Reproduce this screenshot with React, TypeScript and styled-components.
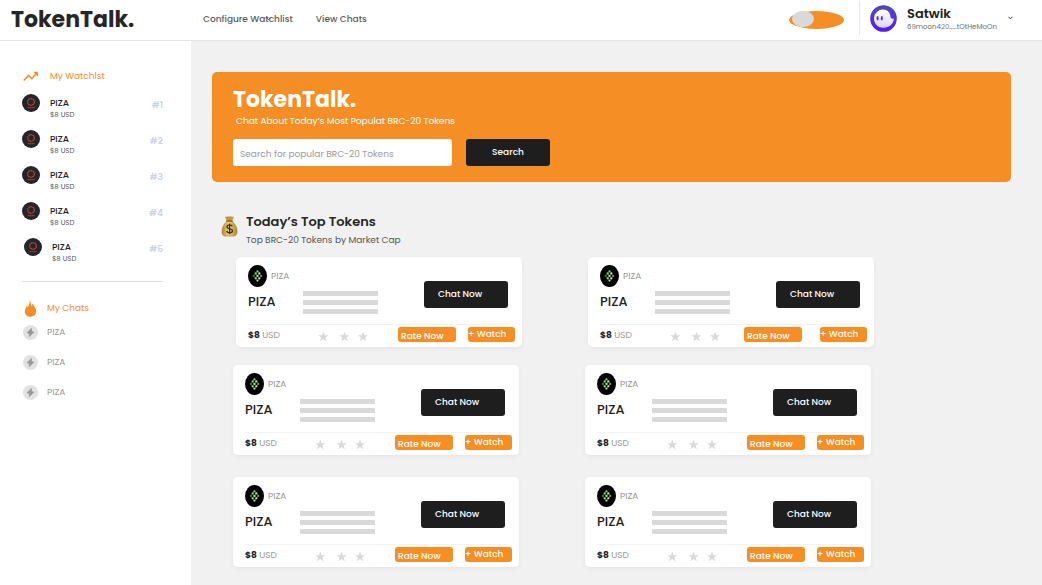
import React from "react";
import styled, { createGlobalStyle } from "styled-components";

const orange = "#f58e25";
const ink = "#1e1e1e";

const GlobalStyle = createGlobalStyle`
  *, *::before, *::after { box-sizing: border-box; }
  body {
    margin: 0;
    background: #f1f1f1;
    color: ${ink};
    font-family: Poppins, Inter, "Liberation Sans", sans-serif;
  }
  button, input { font-family: inherit; }
  h1, h2, h3, p, ul, ol { margin: 0; padding: 0; }
  ul, ol { list-style: none; }
`;

const Page = styled.div`
  display: flex;
  flex-direction: column;
  min-height: 100vh;
`;

/* ---------- header ---------- */

const Header = styled.header`
  display: flex;
  align-items: center;
  height: 41px;
  background: #fff;
  border-bottom: 1px solid #e6e6e6;
`;

const Logo = styled.a`
  flex: none;
  width: 192px;
  padding-left: 11px;
  font-size: 22px;
  line-height: 28px;
  font-weight: 700;
  color: #262626;
  text-decoration: none;
`;

const Nav = styled.nav`
  display: flex;
  flex: 1;
  gap: 23px;
  padding: 0 11px 3px;
`;

const NavLink = styled.a`
  position: relative;
  font-size: 9px;
  line-height: 14px;
  font-weight: 500;
  color: #5c5c5c;
  text-decoration: none;
`;

const NavMark = styled.svg`
  position: absolute;
  left: 63px;
  top: 5px;
`;

const Toggle = styled.input`
  appearance: none;
  flex: none;
  width: 55px;
  height: 18px;
  margin: 0 15px 0 0;
  padding: 0 3px;
  border-radius: 50%;
  background: ${orange};
  cursor: pointer;

  &::before {
    content: "";
    display: block;
    width: 22px;
    height: 16px;
    border-radius: 50%;
    background: #d9d9d9;
  }
`;

const Account = styled.button`
  display: flex;
  align-items: center;
  height: 34px;
  margin: 0 0 4px;
  padding: 0 29px 0 10px;
  border: 0;
  border-left: 1px solid #e6e6e6;
  background: none;
  text-align: left;
  color: ${ink};
  cursor: pointer;
`;

const AccountText = styled.span`
  display: flex;
  flex-direction: column;
  width: 90px;
  margin: 0 11px 0 10px;
  padding-top: 2px;
`;

const AccountName = styled.span`
  font-size: 13px;
  line-height: 16px;
  font-weight: 600;
`;

const AccountAddress = styled.span`
  font-size: 7px;
  line-height: 10px;
  color: #6f6f6f;
`;

/* ---------- sidebar ---------- */

const Body = styled.div`
  display: flex;
  flex: 1;
`;

const Sidebar = styled.aside`
  flex: none;
  width: 192px;
  padding: 25px 28px 0 22px;
  background: #fff;
  border-right: 1px solid #f1f1f1;
`;

const SideHeading = styled.h2<{ $indent: number }>`
  display: grid;
  grid-template-columns: ${(p) => p.$indent}px 1fr;
  align-items: center;
  height: 21px;
  font-size: 9px;
  font-weight: 400;
  color: ${orange};
`;

const WatchItem = styled.li`
  display: flex;
  height: 36px;

  &:last-child { padding-left: 2px; }
`;

const WatchCoin = styled.svg`
  flex: none;
  margin: 7px 10px 0 0;
`;

const WatchText = styled.div`
  flex: 1;
  padding-top: 10px;
`;

const WatchName = styled.p`
  font-size: 9px;
  line-height: 13px;
  font-weight: 500;
`;

const WatchPrice = styled.p`
  font-size: 7px;
  line-height: 9px;
  color: #555;
`;

const Rank = styled.span`
  font-size: 9px;
  line-height: 36px;
  font-weight: 600;
  color: #cbd3e3;
`;

const Rule = styled.hr`
  height: 1px;
  margin: 14px 0 16px;
  border: 0;
  background: #e0e0e0;
`;

const ChatItem = styled.li`
  display: grid;
  grid-template-columns: 25px 1fr;
  align-items: center;
  height: 30px;
  padding-bottom: 4px;
  font-size: 9px;
  color: #999;

  svg { margin-left: 1px; }
`;

/* ---------- main ---------- */

const Main = styled.main`
  flex: 1;
  min-width: 0;
  padding: 31px 31px 18px 20px;
`;

const Hero = styled.section`
  padding: 14px 21px 16px;
  border-radius: 5px;
  background: ${orange};
  color: #fff;
`;

const HeroTitle = styled.h1`
  font-size: 22px;
  line-height: 28px;
  font-weight: 700;
`;

const HeroText = styled.p`
  padding-left: 3px;
  font-size: 9px;
  line-height: 15px;
`;

const SearchForm = styled.form`
  display: flex;
  gap: 14px;
  margin-top: 10px;
`;

const SearchBox = styled.input`
  width: 219px;
  height: 27px;
  padding: 3px 7px 0;
  border: 0;
  border-radius: 3px;
  background: #fff;
  font-size: 9px;
  color: ${ink};

  &::placeholder { color: #9b9b9b; opacity: 1; }
`;

const DarkButton = styled.button<{ $align: string }>`
  flex: none;
  width: 84px;
  height: 27px;
  padding: 0 14px;
  border: 0;
  border-radius: 3px;
  background: ${ink};
  color: #fff;
  font-size: 9px;
  font-weight: 500;
  text-align: ${(p) => p.$align};
  cursor: pointer;
`;

const SectionHeading = styled.div`
  display: flex;
  align-items: center;
  gap: 8px;
  margin: 30px 0 0 9px;
  padding-bottom: 2px;
`;

const SectionTitle = styled.h2`
  font-size: 13px;
  line-height: 20px;
  font-weight: 600;
  color: #262626;
`;

const SectionText = styled.p`
  font-size: 9px;
  line-height: 16px;
  color: #555;
`;

const Bag = styled.svg`
  flex: none;
  margin-bottom: 8px;
`;

const TokenRow = styled.div<{ $indent: number; $space: number }>`
  display: flex;
  gap: 66px;
  margin-top: ${(p) => p.$space}px;
  padding-left: ${(p) => p.$indent}px;
`;

const Card = styled.article`
  width: 286px;
  height: 90px;
  padding: 8px 7px 0 12px;
  border-radius: 5px;
  background: #fff;
  box-shadow: 0 2px 5px rgba(0, 0, 0, 0.05);
`;

const CardTop = styled.div`
  display: flex;
  height: 60px;
  margin-right: 5px;
  border-bottom: 1px solid #f3f3f3;
`;

const CardIdentity = styled.div`
  width: 55px;
`;

const Ticker = styled.p`
  display: flex;
  align-items: center;
  gap: 4px;
  height: 22px;
  font-size: 9px;
  color: #999;
`;

const TokenName = styled.h3`
  margin-top: 5px;
  font-size: 13px;
  line-height: 20px;
  font-weight: 500;
`;

const Lines = styled.div`
  display: flex;
  flex-direction: column;
  gap: 4px;
  width: 75px;
  padding-top: 26px;
`;

const Line = styled.span`
  height: 5px;
  background: #d9d9d9;
`;

const CardAction = styled.div`
  display: flex;
  align-items: flex-start;
  margin: 16px 2px 0 auto;
`;

const CardBottom = styled.div`
  display: flex;
  padding-top: 2px;
`;

const Price = styled.p`
  width: 70px;
  font-size: 9px;
  line-height: 17px;
  color: #999;

  strong { font-weight: 700; color: ${ink}; }
`;

const Stars = styled.svg`
  flex: none;
  margin-top: 4px;
`;

const Actions = styled.div<{ $gap: number }>`
  display: flex;
  gap: ${(p) => p.$gap}px;
  margin-left: auto;
`;

const RateButton = styled.button`
  width: 58px;
  height: 15px;
  padding: 3px 3px 0;
  border: 0;
  border-radius: 3px;
  background: ${orange};
  color: #fff;
  font-size: 9px;
  line-height: 12px;
  font-weight: 500;
  text-align: left;
  cursor: pointer;
`;

const WatchButton = styled(RateButton)`
  width: 47px;
  padding: 0 0 1px;
`;

/* ---------- drawings ---------- */

const Avatar = () => (
  <svg width="27" height="27" viewBox="0 0 27 27" aria-hidden="true">
    <defs>
      <linearGradient id="ring" x1="0" y1="0" x2="0" y2="1">
        <stop offset="0" stopColor="#534bb1" />
        <stop offset="1" stopColor="#551bf9" />
      </linearGradient>
      <linearGradient id="ghost" x1="0" y1="0" x2="0" y2="1">
        <stop offset="0" stopColor="#fff" />
        <stop offset="1" stopColor="#dcd6fb" />
      </linearGradient>
    </defs>
    <circle cx="13.5" cy="13.5" r="13.3" fill="url(#ring)" />
    <path d="M4 13a9 9 0 0 1 9-8.500c4.500 0 7.200 3 7.500 7.200.1 1.700 1.300 2.200 3.300 1.800 0 5.500-4.600 9.300-10.400 9.300C7.800 22.800 3.700 18.500 4 13z" fill="url(#ghost)" />
    <ellipse cx="7.600" cy="13.300" rx="1" ry="2.200" fill="#4b35c9" />
    <ellipse cx="11.800" cy="13.300" rx="1" ry="2.200" fill="#4b35c9" />
  </svg>
);

const Chevron = () => (
  <svg width="5" height="4" viewBox="0 0 5 4" aria-hidden="true">
    <path d="M.6.8l1.900 2 1.900-2" fill="none" stroke="#333" strokeWidth="1" />
  </svg>
);

const TrendIcon = () => (
  <svg width="17" height="11" viewBox="0 0 17 11" aria-hidden="true">
    <path d="M1.800 9.500l4.700-5 3.300 3.200L15 2" fill="none" stroke={orange} strokeWidth="1.600" />
    <path d="M11 .8h5v5z" fill={orange} />
  </svg>
);

const FireIcon = () => (
  <svg width="17" height="17" viewBox="0 0 17 17" aria-hidden="true">
    <path d="M7.900 0c.8 1.900 1.200 4 1.100 6.500.9-.9 1.300-2 1.500-3.200 1 2.800 3.700 4.600 3.700 8 0 3.300-2.500 5.400-5.700 5.400s-5.600-2.100-5.600-5.300c0-2.300 1.400-3.600 2-6.100.4.700.7 1.300.8 2.100C6.900 5.300 7.900 3.100 7.900 0z" fill={orange} />
  </svg>
);

const PizaCoin = () => (
  <WatchCoin width="18" height="18" viewBox="0 0 18 18" aria-hidden="true">
    <circle cx="9" cy="9" r="9" fill="#24262c" />
    <circle cx="9" cy="8" r="3.300" fill="none" stroke="#bd402c" strokeWidth="1.300" strokeDasharray="1.700 .37" />
    <path d="M5.600 13.700h7" stroke="#bd402c" strokeWidth="1" strokeDasharray="1.600 .3" />
  </WatchCoin>
);

const BoltCoin = () => (
  <svg width="15" height="15" viewBox="0 0 15 15" aria-hidden="true">
    <circle cx="7.500" cy="7.500" r="7.500" fill="#e1e1e1" />
    <path d="M8.300 3.500L4.200 7.700l2.300.9-.1 2.900 4.300-4.400-2.200-.6z" fill="#979797" stroke="#979797" strokeWidth=".8" strokeLinejoin="round" />
  </svg>
);

const dots = [
  [9.5, 6.3, "#7fd08c"], [7.7, 8.4, "#7fd9a0"], [11.3, 8.4, "#c9e39a"],
  [5.8, 10.9, "#35795a"], [9.5, 10.9, "#b5e39c"], [13.2, 10.9, "#8d8b4c"],
  [7.7, 13.3, "#8be08f"], [11.3, 13.3, "#e3dc92"], [9.5, 15.6, "#a9d987"],
] as const;

const TokenCoin = () => (
  <svg width="19" height="22" viewBox="0 0 19 22" aria-hidden="true">
    <ellipse cx="9.500" cy="11" rx="9.500" ry="11" fill="#000" />
    <path d="M9.500 6.300l4 4.600-4 4.700-4-4.700zM7.700 8.400l3.600 4.900M11.300 8.400l-3.600 4.900" fill="none" stroke="#4d8a5a" strokeWidth=".5" />
    {dots.map(([x, y, fill]) => (
      <circle key={`${x}-${y}`} cx={x} cy={y} r="1.150" fill={fill} />
    ))}
  </svg>
);

const MoneyBag = () => (
  <Bag width="17" height="22" viewBox="0 0 17 22" aria-hidden="true">
    <defs>
      <linearGradient id="bag" x1="0" y1="0" x2="1" y2="0">
        <stop offset="0" stopColor="#b5852f" />
        <stop offset=".45" stopColor="#f0d277" />
        <stop offset="1" stopColor="#b5852f" />
      </linearGradient>
    </defs>
    <path d="M4 1.500c1.200.6 2 .2 2.800-.3.900.5 2.200.5 3.200 0 .8.500 1.700.8 2.900.2-.3 1.900-1.300 3.500-2.200 5H6.300C5.300 4.900 4.300 3.400 4 1.500z" fill="#c2954a" />
    <path d="M6.300 6h4.500c3.200 2.600 5.300 6.500 5.300 10.200 0 3.600-1.400 4.800-3.600 4.800H4.400C2.200 21 1 19.800 1 16.200 1 12.500 3.100 8.600 6.300 6z" fill="url(#bag)" stroke="#a77a33" strokeWidth=".6" />
    <path d="M5.500 6.200h6" stroke="#8a5f22" strokeWidth="1.200" strokeLinecap="round" />
    <path d="M11.300 11.300c-.4-1-1.400-1.400-2.700-1.400-1.500 0-2.600.7-2.600 1.900 0 2.800 5.500 1.200 5.500 4 0 1.300-1.200 2-2.800 2-1.500 0-2.700-.6-3-1.800M8.600 8.600v10.600" fill="none" stroke="#3a352b" strokeWidth="1.300" />
  </Bag>
);

const star = "M0-5.200l1.250 3.600h3.900L2.100.700l1.150 3.700L0 2.150l-3.250 2.250L-2.100.700l-3.050-2.300h3.900z";

const StarRating = () => (
  <Stars width="50" height="11" viewBox="0 0 50 11" role="img" aria-label="Rating">
    {[5.3, 26.5, 45].map((x) => (
      <path key={x} d={star} transform={`translate(${x} 5.800)`} fill="#d9d9d9" />
    ))}
  </Stars>
);

const TokenCard = ({ actionGap = 12 }: { actionGap?: number }) => (
  <Card>
    <CardTop>
      <CardIdentity>
        <Ticker><TokenCoin />PIZA</Ticker>
        <TokenName>PIZA</TokenName>
      </CardIdentity>
      <Lines><Line /><Line /><Line /></Lines>
      <CardAction>
        <DarkButton type="button" $align="left">Chat Now</DarkButton>
      </CardAction>
    </CardTop>
    <CardBottom>
      <Price><strong>$8</strong> USD</Price>
      <StarRating />
      <Actions $gap={actionGap}>
        <RateButton type="button">Rate Now</RateButton>
        <WatchButton type="button">+ Watch</WatchButton>
      </Actions>
    </CardBottom>
  </Card>
);

export default function App() {
  return (
    <Page>
      <GlobalStyle />
      <Header>
        <Logo href="#">TokenTalk.</Logo>
        <Nav>
          <NavLink href="#configure">
            Configure Watchlist
            <NavMark width="5" height="4" viewBox="0 0 5 4" aria-hidden="true">
              <path d="M.6.8l1.900 2 1.900-2" fill="none" stroke="#444" />
            </NavMark>
          </NavLink>
          <NavLink href="#chats">View Chats</NavLink>
        </Nav>
        <Toggle type="checkbox" role="switch" aria-label="Theme" />
        <Account type="button">
          <Avatar />
          <AccountText>
            <AccountName>Satwik</AccountName>
            <AccountAddress>69moon420.....tOtHeMoOn</AccountAddress>
          </AccountText>
          <Chevron />
        </Account>
      </Header>
      <Body>
        <Sidebar>
          <SideHeading $indent={28}><TrendIcon />My Watchlst</SideHeading>
          <ol>
            {[1, 2, 3, 4, 5].map((rank) => (
              <WatchItem key={rank}>
                <PizaCoin />
                <WatchText>
                  <WatchName>PIZA</WatchName>
                  <WatchPrice>$8 USD</WatchPrice>
                </WatchText>
                <Rank>#{rank}</Rank>
              </WatchItem>
            ))}
          </ol>
          <Rule />
          <SideHeading $indent={25}><FireIcon />My Chats</SideHeading>
          <ul>
            {[1, 2, 3].map((chat) => (
              <ChatItem key={chat}><BoltCoin />PIZA</ChatItem>
            ))}
          </ul>
        </Sidebar>
        <Main>
          <Hero>
            <HeroTitle>TokenTalk.</HeroTitle>
            <HeroText>Chat About Today’s Most Populat BRC-20 Tokens</HeroText>
            <SearchForm>
              <SearchBox type="search" aria-label="Search tokens" placeholder="Search for popular BRC-20 Tokens" />
              <DarkButton type="button" $align="center">Search</DarkButton>
            </SearchForm>
          </Hero>
          <SectionHeading>
            <MoneyBag />
            <div>
              <SectionTitle>Today’s Top Tokens</SectionTitle>
              <SectionText>Top BRC-20 Tokens by Market Cap</SectionText>
            </div>
          </SectionHeading>
          <TokenRow $indent={24} $space={7}>
            <TokenCard />
            <TokenCard actionGap={18} />
          </TokenRow>
          <TokenRow $indent={21} $space={18}>
            <TokenCard />
            <TokenCard />
          </TokenRow>
          <TokenRow $indent={21} $space={22}>
            <TokenCard />
            <TokenCard />
          </TokenRow>
        </Main>
      </Body>
    </Page>
  );
}
